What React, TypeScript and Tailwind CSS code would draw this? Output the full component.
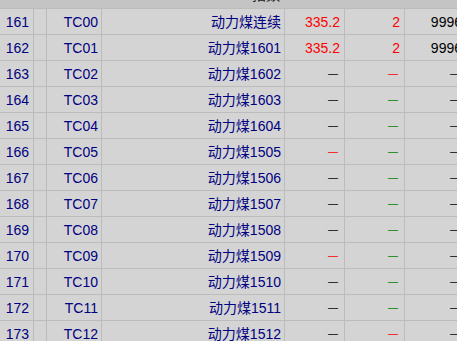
const K = "text-black";
const R = "text-[#ff0000]";
const G = "text-[#008000]";

type Row = {
  no: number;
  code: string;
  name: string;
  price?: string;
  vol?: string;
  last?: string;
  dash?: [string, string, string];
};

const rows: Row[] = [
  { no: 161, code: "TC00", name: "动力煤连续", price: "335.2", vol: "2", last: "9996" },
  { no: 162, code: "TC01", name: "动力煤1601", price: "335.2", vol: "2", last: "9996" },
  { no: 163, code: "TC02", name: "动力煤1602", dash: [K, R, K] },
  { no: 164, code: "TC03", name: "动力煤1603", dash: [K, G, K] },
  { no: 165, code: "TC04", name: "动力煤1604", dash: [K, G, K] },
  { no: 166, code: "TC05", name: "动力煤1505", dash: [R, G, K] },
  { no: 167, code: "TC06", name: "动力煤1506", dash: [K, G, K] },
  { no: 168, code: "TC07", name: "动力煤1507", dash: [K, G, K] },
  { no: 169, code: "TC08", name: "动力煤1508", dash: [K, G, K] },
  { no: 170, code: "TC09", name: "动力煤1509", dash: [R, G, K] },
  { no: 171, code: "TC10", name: "动力煤1510", dash: [K, G, K] },
  { no: 172, code: "TC11", name: "动力煤1511", dash: [K, G, K] },
  { no: 173, code: "TC12", name: "动力煤1512", dash: [K, R, K] },
];

function Dash({ color }: { color: string }) {
  return <span className={`text-[10px] pr-[2px] ${color}`}>—</span>;
}

function App() {
  return (
    <div
      className="w-[457px] h-[341px] overflow-hidden bg-[#d4d4d4] text-[14px] leading-[16px] text-[#000080]"
      style={{ fontFamily: '"Liberation Sans", "Noto Sans CJK SC", sans-serif' }}
    >
      <div className="flex h-[9px] bg-[#c4c4c4] border-b border-[#bcbcbc] overflow-hidden">
        <div className="w-[284px] shrink-0 flex justify-end pr-[4px]">
          <span className="-mt-[13px] text-[#202020]">指数</span>
        </div>
      </div>
      {rows.map((r) => (
        <div key={r.no} className="flex h-[26px] border-b border-[#bcbcbc] w-[466px]">
          <div className="w-[34px] shrink-0 border-r border-[#bcbcbc] flex items-center justify-end pr-[4px]">
            {r.no}
          </div>
          <div className="w-[13px] shrink-0 border-r border-[#bcbcbc]" />
          <div className="w-[55px] shrink-0 border-r border-[#bcbcbc] flex items-center justify-end pr-[3px]">
            {r.code}
          </div>
          <div className="w-[183px] shrink-0 border-r border-[#bcbcbc] flex items-center justify-end pr-[3px]">
            {r.name}
          </div>
          <div className="w-[60px] shrink-0 border-r border-[#bcbcbc] flex items-center justify-end pr-[4px] text-[#ff0000]">
            {r.dash ? <Dash color={r.dash[0]} /> : r.price}
          </div>
          <div className="w-[60px] shrink-0 border-r border-[#bcbcbc] flex items-center justify-end pr-[4px] text-[#ff0000]">
            {r.dash ? <Dash color={r.dash[1]} /> : r.vol}
          </div>
          <div className="w-[61px] shrink-0 flex items-center justify-end pr-[4px] text-black">
            {r.dash ? <Dash color={r.dash[2]} /> : r.last}
          </div>
        </div>
      ))}
    </div>
  );
}

export default App;
